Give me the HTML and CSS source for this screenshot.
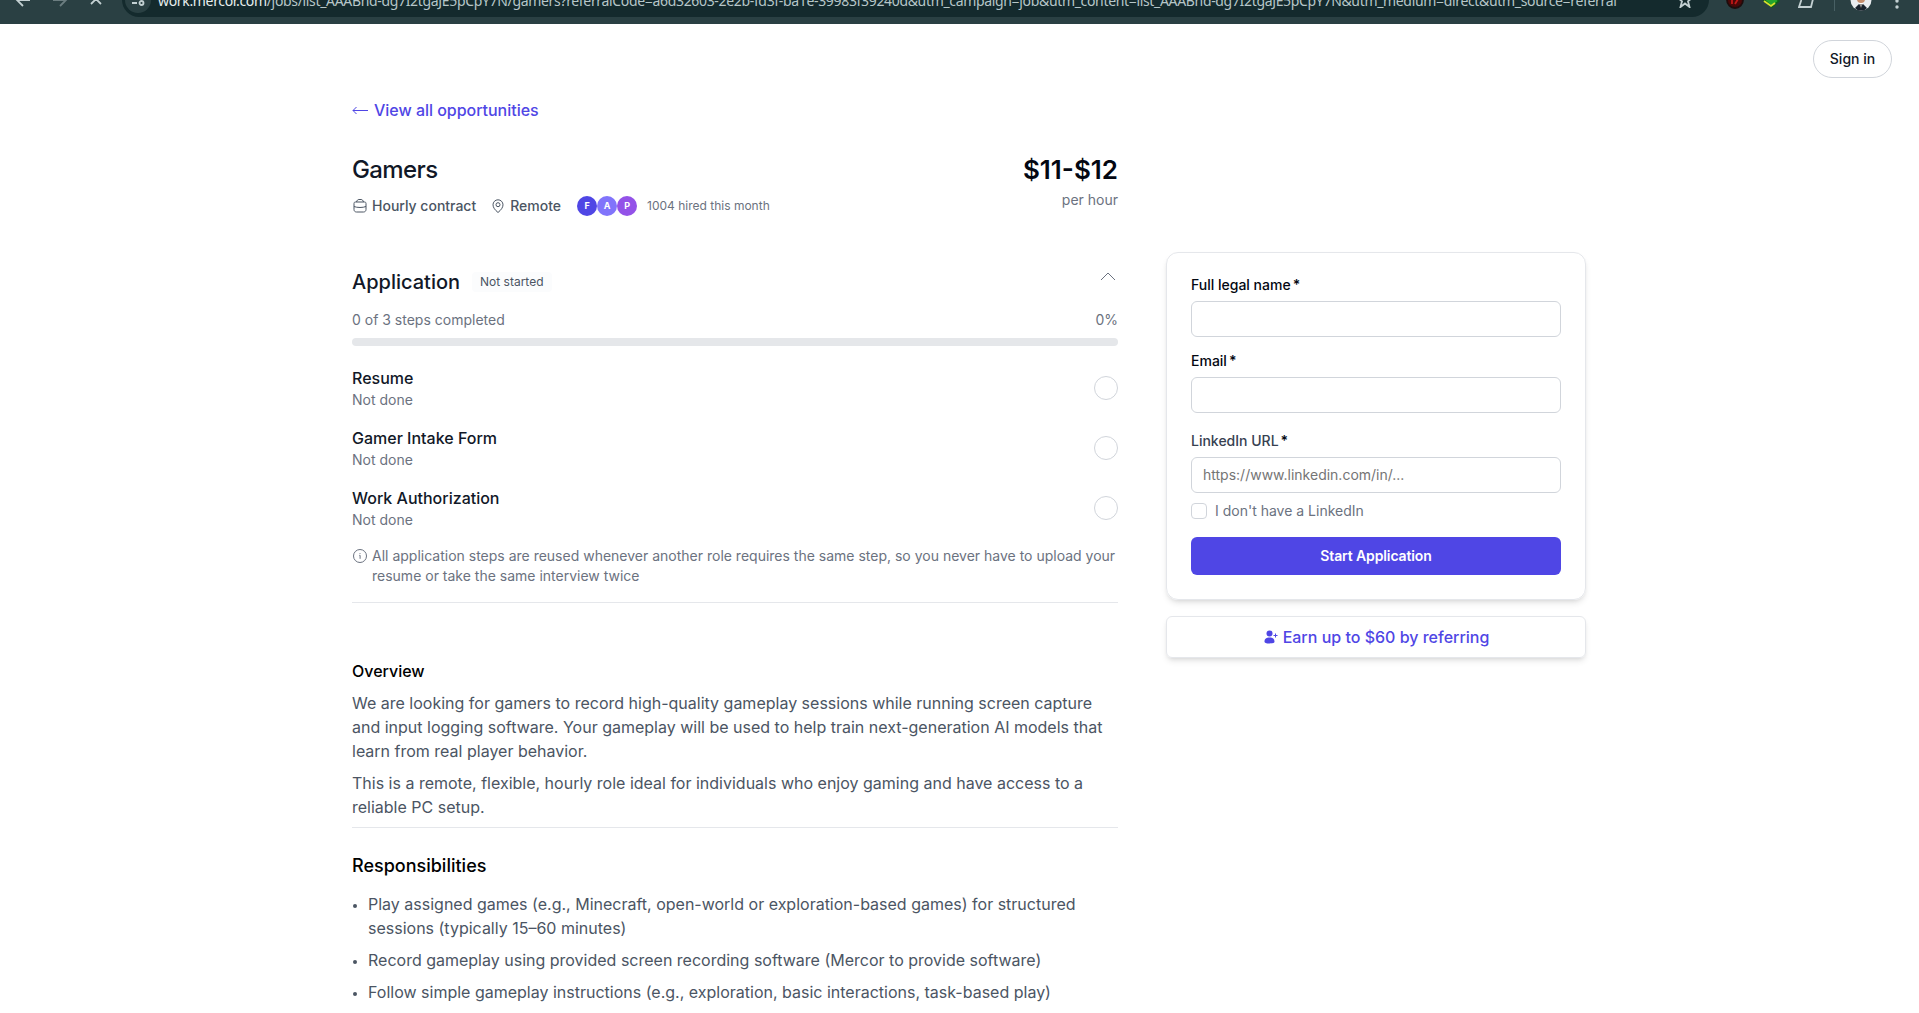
FILE: index.html
```html
<!DOCTYPE html>
<html lang="en">
<head>
<meta charset="utf-8">
<title>Gamers | Mercor</title>
<link rel="stylesheet" href="styles.css">
</head>
<body>
<div class="toolbar">
    <div class="nav">
        <svg width="16" height="16" viewBox="0 0 16 16"><path d="M15 8H2M8 2L2 8l6 6"/></svg>
        <svg class="dim" width="16" height="16" viewBox="0 0 16 16"><path d="M1 8h13M8 2l6 6-6 6"/></svg>
        <svg width="14" height="14" viewBox="0 0 14 14"><path d="M2 2l10 10M12 2L2 12"/></svg>
    </div>
    <div class="address">
        <span class="site">
            <svg width="14" height="14" viewBox="0 0 14 14"><path d="M7 4h6M1 10h5"/><circle cx="3" cy="4" r="2"/><circle cx="10.500" cy="10" r="2"/></svg>
        </span>
        <span class="url"><b>work.mercor.com</b>/jobs/list_AAABnd-dg7I2tgaJE5pCpY7N/gamers?referralCode=a6d32603-2e2b-fd3f-ba1e-39983f39240d&amp;utm_campaign=job&amp;utm_content=list_AAABnd-dg7I2tgaJE5pCpY7N&amp;utm_medium=direct&amp;utm_source=referral</span>
        <svg class="star" width="16" height="16" viewBox="0 0 16 16"><path d="M8 1l2 5h5l-4 3.300L12.500 15 8 11.500 3.500 15 5 9.300 1 6h5z"/></svg>
    </div>
    <div class="extensions">
        <svg width="18" height="18" viewBox="0 0 18 18"><circle class="red" cx="9" cy="9" r="8"/><path class="redmark" d="M6 13V8l6 0-3 5"/></svg>
        <svg width="18" height="18" viewBox="0 0 18 18"><path class="green" d="M1 8l8-6 8 8-7 6z"/><path class="lime" d="M2 10l7 5 4-3"/></svg>
        <svg width="18" height="18" viewBox="0 0 18 18"><path d="M4 4h12l-3 12H1l2-6z"/></svg>
        <i class="sep"></i>
        <svg class="avatar" width="22" height="22" viewBox="0 0 22 22"><circle class="face-bg" cx="11" cy="11" r="10.500"/><path class="suit" d="M5 19l4-4h4l4 4-3 2.500H8z"/><circle class="face" cx="11" cy="10" r="4"/><path class="shirt" d="M9 14h4l-2 5z"/><path class="tie" d="M11 15v5"/></svg>
        <svg class="dots" width="4" height="18" viewBox="0 0 4 18"><circle cx="2" cy="4" r="1.700"/><circle cx="2" cy="10" r="1.700"/><circle cx="2" cy="16" r="1.700"/></svg>
    </div>
</div>

<div class="header">
    <a class="signin">Sign in</a>
</div>

<div class="page">
    <div class="main">
        <a class="back">
            <svg width="16" height="10" viewBox="0 0 16 10"><path d="M16 5.500H1M4.500 2L1 5.500 4.500 9"/></svg>
            View all opportunities
        </a>

        <div class="title">
            <div>
                <h1>Gamers</h1>
                <div class="meta">
                    <span class="item">
                        <svg width="16" height="16" viewBox="0 0 16 16"><path d="M2 5.500c0-1 .5-1.500 1.500-1.500h9c1 0 1.500.5 1.500 1.500v6c0 1.500-1 2.500-2.500 2.500h-7C3 14 2 13 2 11.500zM4.500 4c.5-1.800 1.300-2.500 2.500-2.500h2c1.200 0 2 .7 2.500 2.500M2 8.500c3 1.300 9 1.300 12 0"/></svg>
                        Hourly contract
                    </span>
                    <span class="item">
                        <svg width="16" height="16" viewBox="0 0 16 16"><path d="M8 14.500C5 12 3 9.500 3 6.800a5 5 0 0 1 10 0C13 9.500 11 12 8 14.500z"/><circle cx="8" cy="6.700" r="2"/></svg>
                        Remote
                    </span>
                    <span class="hired">
                        <span class="faces"><i class="f">F</i><i class="a">A</i><i class="p">P</i></span>
                        1004 hired this month
                    </span>
                </div>
            </div>
            <div class="pay">
                <b>$11-$12</b>
                <span>per hour</span>
            </div>
        </div>

        <div class="application">
            <div class="app-head">
                <h2>Application</h2>
                <span class="badge">Not started</span>
                <svg class="chevron" width="16" height="10" viewBox="0 0 16 10"><path d="M1 8l7-7 7 7"/></svg>
            </div>
            <div class="progress-text"><span>0 of 3 steps completed</span><span>0%</span></div>
            <div class="progress"></div>
            <ul class="steps">
                <li><div><b>Resume</b><span>Not done</span></div><i></i></li>
                <li><div><b>Gamer Intake Form</b><span>Not done</span></div><i></i></li>
                <li><div><b>Work Authorization</b><span>Not done</span></div><i></i></li>
            </ul>
            <div class="note">
                <svg width="16" height="16" viewBox="0 0 16 16"><circle cx="8" cy="8" r="6.500"/><path d="M7.300 7.300h.8v3.500M8 5v.8"/></svg>
                <p>All application steps are reused whenever another role requires the same step, so you never have to upload your resume or take the same interview twice</p>
            </div>
        </div>

        <div class="content">
            <h3>Overview</h3>
            <p>We are looking for gamers to record high-quality gameplay sessions while running screen capture and input logging software. Your gameplay will be used to help train next-generation AI models that learn from real player behavior.</p>
            <p>This is a remote, flexible, hourly role ideal for individuals who enjoy gaming and have access to a reliable PC setup.</p>
            <hr>
            <h2>Responsibilities</h2>
            <ul>
                <li>Play assigned games (e.g., Minecraft, open-world or exploration-based games) for structured sessions (typically 15–60 minutes)</li>
                <li>Record gameplay using provided screen recording software (Mercor to provide software)</li>
                <li>Follow simple gameplay instructions (e.g., exploration, basic interactions, task-based play)</li>
            </ul>
        </div>
    </div>

    <div class="side">
        <form class="card">
            <label for="name">Full legal name<em>*</em></label>
            <input class="text" type="text" id="name">
            <label for="email">Email<em>*</em></label>
            <input class="text" type="text" id="email">
            <label class="linkedin" for="linkedin">LinkedIn URL<em>*</em></label>
            <input class="text" type="text" id="linkedin" placeholder="https://www.linkedin.com/in/...">
            <div class="check"><input type="checkbox" id="none"><label for="none">I don't have a LinkedIn</label></div>
            <button type="button">Start Application</button>
        </form>
        <a class="refer">
            <svg width="14" height="14" viewBox="0 0 14 14"><circle cx="5.500" cy="3.500" r="3"/><path d="M.5 11.500C.5 8.500 2.500 7.500 5.500 7.500s5 1 5 4c0 1.500-1.500 2-5 2s-5-.5-5-2z"/><path class="plus" d="M11.500 3.500v4M9.500 5.500h4"/></svg>
            Earn up to $60 by referring
        </a>
    </div>
</div>
</body>
</html>
```
FILE: styles.css
```css
*{margin:0; padding:0; box-sizing:border-box;}
html,body{height:1013px; overflow:hidden;}
body{font-family:Inter, "Liberation Sans", sans-serif; font-size:16px; line-height:24px; color:#111827; background:#fff;}
ul{list-style:none;}
i,em{font-style:normal;}
svg{fill:none; stroke:currentColor; flex:none;}

/* browser toolbar */
.toolbar{height:24px; overflow:hidden; background:#2a4043; color:#c3d0d2; display:flex; align-items:flex-start;}
.toolbar svg{stroke-width:1.8;}
.nav{width:122px; padding-left:15px; margin-top:-8px; display:flex; gap:21px; flex:none;}
.nav .dim{color:#6b7d80;}
.address{width:1587px; height:34px; margin-top:-17px; padding:0 16px 0 3px; border-radius:17px; background:#142a2d; display:flex; align-items:center; flex:none;}
.site{width:26px; height:26px; border-radius:50%; background:#2a4043; display:flex; align-items:center; justify-content:center; margin-right:7px; flex:none;}
.url{padding-top:2px; font-family:"Noto Sans", sans-serif; font-size:14px; line-height:20px; letter-spacing:-.333px; white-space:nowrap; color:#b6c6c8;}
.url b{font-weight:400; color:#e6eeee;}
.star{margin-left:auto;}
.extensions{margin-top:-11px; padding-left:17px; display:flex; align-items:center; gap:18px;}
.extensions .red{fill:#4a0808; stroke:#1d0d0d;}
.extensions .redmark{stroke:#c01818;}
.extensions .green{fill:#23a52d; stroke:#0d5f1c;}
.extensions .lime{stroke:#d4e02c;}
.extensions .sep{width:1px; height:22px; background:#486064;}
.avatar{margin-left:-3px;}
.avatar .face-bg{fill:#e9ecef; stroke:none;}
.avatar .suit{fill:#18222d; stroke:none;}
.avatar .face{fill:#c58d6c; stroke:none;}
.avatar .shirt{fill:#fff; stroke:none;}
.avatar .tie{stroke:#222; stroke-width:1;}
.extensions .dots{margin-left:5px; fill:currentColor; stroke:none;}

.header{height:76px; padding:16px 27px 0 0; display:flex; justify-content:flex-end;}
.signin{width:79px; height:38px; border:1px solid #d1d5db; border-radius:19px; font-size:14px; font-weight:500; line-height:36px; text-align:center;}

.page{width:1234px; margin-left:352px; display:flex; gap:48px; align-items:flex-start;}
.main{width:766px;}
.back{height:20px; display:flex; align-items:center; gap:6px; color:#4f46e5; font-weight:500; letter-spacing:-.03px;}

.title{margin-top:34px; display:flex; justify-content:space-between;}
.title h1{font-size:24px; line-height:32px; font-weight:500; letter-spacing:-.6px;}
.meta{margin-top:8px; display:flex; align-items:center; height:24px; color:#4b5563; font-size:14px; font-weight:500;}
.item{display:flex; align-items:center; gap:4px; margin-right:14px;}
.item + .item{margin-right:16px;}
.hired{display:flex; align-items:center; color:#6b7280; font-size:12px; font-weight:400;}
.faces{display:flex; margin-right:10px;}
.faces i{width:20px; height:20px; border-radius:50%; color:#fff; font-size:9px; font-weight:700; line-height:20px; text-align:center;}
.faces .f{background:#4f46e5;}
.faces .a{background:#8174fb;}
.faces .p{background:#9352e8;}
.pay{text-align:right; color:#030712;}
.pay b{display:block; font-size:26px; line-height:32px; font-weight:600;}
.pay span{display:block; margin-top:2px; font-size:14px; color:#6b7280;}

.application{margin-top:50px; height:335px; border-bottom:1px solid #e5e7eb;}
.app-head{height:28px; display:flex; align-items:center;}
.app-head h2{font-size:20px; line-height:28px; font-weight:500;}
.badge{margin-left:12px; padding:0 8px; border-radius:4px; background:#fbfcfd; color:#4b5563; font-size:12px; line-height:20px;}
.chevron{margin:0 2px 10px auto; color:#6b7280;}
.progress-text{margin-top:14px; display:flex; justify-content:space-between; font-size:14px; line-height:20px; color:#6b7280;}
.progress{margin-top:8px; height:8px; border-radius:4px; background:#e5e7ea;}
.steps{margin-top:20px;}
.steps li{height:60px; display:flex; justify-content:space-between; align-items:flex-start;}
.steps b{display:block; font-weight:500; line-height:24px;}
.steps span{display:block; font-size:14px; line-height:20px; color:#6b7280;}
.steps i{width:24px; height:24px; margin-top:10px; border:1px solid #d1d5db; border-radius:50%;}
.note{display:flex; gap:4px; font-size:14px; line-height:20px; color:#6b7280;}
.note svg{margin-top:2px;}

.content{padding-top:56px; color:#4b5563;}
.content h3{font-size:16px; line-height:24px; font-weight:550; color:#000; margin-bottom:8px;}
.content p{margin-bottom:8px;}
.content hr{border:0; border-top:1px solid #e5e7eb;}
.content h2{margin-top:24px; font-size:18px; line-height:28px; font-weight:500; color:#000;}
.content ul{margin-top:12px; list-style:disc; padding-left:16px;}
.content li{margin-bottom:8px;}
.content li::marker{font-size:13px;}

.side{width:420px; margin-top:152px;}
.card{height:348px; padding:22px 24px; border:1px solid #e5e7eb; border-radius:12px; box-shadow:0 4px 6px -1px rgba(0,0,0,.1), 0 2px 4px -2px rgba(0,0,0,.1);}
.card label{display:block; height:20px; margin-bottom:6px; font-size:14px; line-height:20px; font-weight:500; color:#030712;}
.card em{margin-left:2px; font-weight:600; color:#030712;}
.card .text{display:block; width:370px; height:36px; padding:0 11px 1px; margin-bottom:14px; border:1px solid #d1d5db; border-radius:6px; font:14px Inter, sans-serif; background:#fff;}
.card .text::placeholder{color:#757575;}
.card .linkedin{margin-top:18px; color:#374151;}
.card #linkedin{margin-bottom:9px;}
.check{height:18px; display:flex; align-items:center; gap:8px;}
.check input{appearance:none; width:16px; height:16px; border:1px solid #d1d5db; border-radius:4px;}
.check label{margin:0; font-weight:400; color:#6b7280;}
.card button{display:block; width:370px; height:38px; margin-top:17px; padding-bottom:1px; border:0; border-radius:6px; background:#4f46e5; color:#fff; font:600 14px Inter, sans-serif; letter-spacing:-.12px;}
.refer{height:42px; margin-top:16px; padding-left:1px; border:1px solid #e5e7eb; border-radius:6px; display:flex; align-items:center; justify-content:center; gap:5px; color:#4f46e5; font-weight:500; box-shadow:0 4px 6px -1px rgba(0,0,0,.1), 0 2px 4px -2px rgba(0,0,0,.1);}
.refer svg{fill:currentColor; stroke:none;}
.refer .plus{stroke:currentColor; stroke-width:1;}
```
